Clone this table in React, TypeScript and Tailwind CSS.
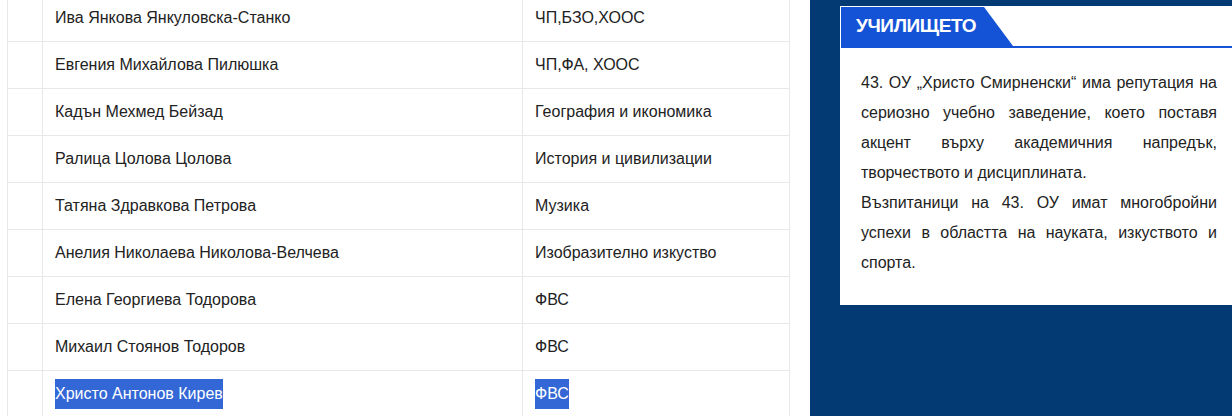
import React from 'react';

const rows: { name: string; subject: string; selected?: boolean }[] = [
  { name: 'Ива Янкова Янкуловска-Станко', subject: 'ЧП,БЗО,ХООС' },
  { name: 'Евгения Михайлова Пилюшка', subject: 'ЧП,ФА, ХООС' },
  { name: 'Кадън Мехмед Бейзад', subject: 'География и икономика' },
  { name: 'Ралица Цолова Цолова', subject: 'История и цивилизации' },
  { name: 'Татяна Здравкова Петрова', subject: 'Музика' },
  { name: 'Анелия Николаева Николова-Велчева', subject: 'Изобразително изкуство' },
  { name: 'Елена Георгиева Тодорова', subject: 'ФВС' },
  { name: 'Михаил Стоянов Тодоров', subject: 'ФВС' },
  { name: 'Христо Антонов Кирев', subject: 'ФВС', selected: true },
];

const Cell = ({ text, selected }: { text: string; selected?: boolean }) =>
  selected ? (
    <span className="inline-block bg-[#3367d6] leading-[30px] text-white">{text}</span>
  ) : (
    <span>{text}</span>
  );

export default function App() {
  return (
    <div
      className="flex h-[416px] w-[1232px] overflow-hidden bg-white text-[#222]"
      style={{ fontFamily: '"Liberation Sans", Arial, sans-serif' }}
    >
      {/* Таблица */}
      <div className="ml-[7px] w-[783px] shrink-0">
        <table className="-mt-[6px] w-full border-collapse text-[16px] leading-[30px]">
          <tbody>
            {rows.map((r, i) => (
              <tr key={i}>
                <td className="h-[47px] w-[35px] border border-[#e8e8e8] p-0" />
                <td className="w-[480px] border border-[#e8e8e8] px-3 py-2">
                  <Cell text={r.name} selected={r.selected} />
                </td>
                <td className="border border-[#e8e8e8] px-3 py-2">
                  <Cell text={r.subject} selected={r.selected} />
                </td>
              </tr>
            ))}
          </tbody>
        </table>
      </div>

      {/* Странична колона */}
      <div className="ml-[20px] flex-1 bg-[#033a73] pl-[30px] pt-[6px]">
        <div className="h-[299px] border-l border-t border-white bg-white">
          <div className="h-[41px] border-b-2 border-[#1553d6]">
            <div className="flex h-full w-[172px] items-center bg-[#1553d6] pl-[15px] [clip-path:polygon(0_0,143px_0,172px_100%,0_100%)]">
              <span className="text-[19px] font-bold tracking-[-0.4px] text-white">УЧИЛИЩЕТО</span>
            </div>
          </div>
          <div className="pl-[20px] pr-[15px] pt-[20px] text-justify text-[16px] leading-[30px] text-[#222]">
            <p>
              43. ОУ „Христо Смирненски“ има репутация на сериозно учебно заведение, което поставя
              акцент върху академичния напредък, творчеството и дисциплината.
            </p>
            <p>
              Възпитаници на 43. ОУ имат многобройни успехи в областта на науката, изкуството и
              спорта.
            </p>
          </div>
        </div>
      </div>
    </div>
  );
}
